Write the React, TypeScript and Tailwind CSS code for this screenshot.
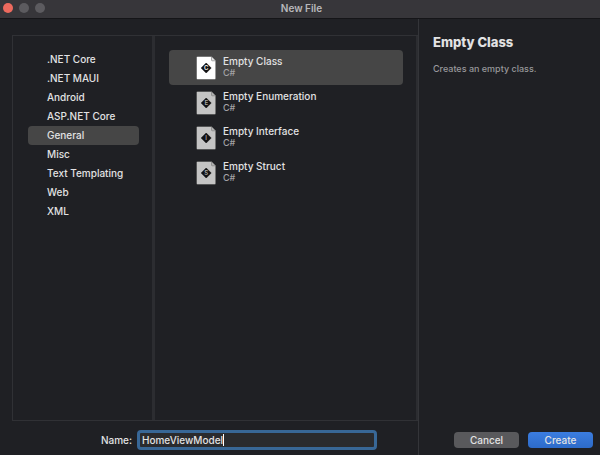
import { useState } from "react";

const categories = [
  ".NET Core",
  ".NET MAUI",
  "Android",
  "ASP.NET Core",
  "General",
  "Misc",
  "Text Templating",
  "Web",
  "XML",
];

const templates = [
  { name: "Empty Class", letter: "C" },
  { name: "Empty Enumeration", letter: "E" },
  { name: "Empty Interface", letter: "I" },
  { name: "Empty Struct", letter: "S" },
];

function FileIcon({ letter, active }: { letter: string; active: boolean }) {
  const paper = active ? "#ffffff" : "#c4c4c4";
  return (
    <svg width="20" height="24" viewBox="0 0 20 24" className="shrink-0" aria-hidden="true">
      <path
        d="M1.5 0.5H15.5L19.7 4.7V22.5Q19.7 23.5 18.7 23.5H1.5Q0.5 23.5 0.5 22.5V1.5Q0.5 0.5 1.5 0.5Z"
        fill={paper}
        stroke="#0d0d0f"
        strokeOpacity="0.6"
        strokeWidth="0.5"
      />
      <path d="M15.5 0.7V4Q15.5 4.8 16.3 4.8H19.6Z" fill={active ? "#e2e2e2" : "#b0b0b0"} />
      <path d="M15.5 0.7V4Q15.5 4.8 16.3 4.8H19.6" fill="none" stroke="#777777" strokeWidth="0.6" />
      <path d="M10.2 7L15.2 12L10.2 17L5.2 12Z" fill="#121214" stroke="#121214" strokeWidth="0.6" strokeLinejoin="round" />
      <text
        x="10.2"
        y="14.2"
        textAnchor="middle"
        fontSize="6"
        fontWeight="600"
        fill={active ? "#ffffff" : "#a8a8a8"}
        className="font-['Inter',sans-serif]"
      >
        {letter}
      </text>
    </svg>
  );
}

export default function App() {
  const [category, setCategory] = useState("General");
  const [template, setTemplate] = useState("Empty Class");
  const [name, setName] = useState("HomeViewModel");

  return (
    <div className="flex min-h-screen flex-col bg-[#1f2024] font-['Inter','Liberation_Sans',sans-serif] text-[10px] font-medium text-[#e2e2e3]">
      <header className="grid h-[19px] shrink-0 grid-cols-[1fr_auto_1fr] items-center border-b border-[#151518] bg-[#37363a] pb-0.5 pl-[3px]">
        <div className="flex gap-1.5">
          <button aria-label="Close" className="size-2.5 rounded-full bg-[#ed6a5e]" />
          <button aria-label="Minimize" className="size-2.5 rounded-full bg-[#5c5b5f]" />
          <button aria-label="Zoom" className="size-2.5 rounded-full bg-[#5c5b5f]" />
        </div>
        <h1 className="leading-3 font-semibold text-[#b9b8bb]">New File</h1>
      </header>

      <main className="flex grow">
        <div className="flex w-[419px] shrink-0 flex-col border-r border-[#343539]">
          <div className="mt-4 ml-3 flex grow border-t border-b border-l border-[#303135]">
            <nav aria-label="Categories" className="w-[139px] shrink-0 pt-[14px] pr-[13px] pl-[15px]">
              {categories.map((item) => (
                <button
                  key={item}
                  onClick={() => setCategory(item)}
                  className={`block h-[19px] w-full rounded px-[19px] text-left leading-[19px] whitespace-nowrap ${
                    item === category ? "bg-[#464646]" : ""
                  }`}
                >
                  {item}
                </button>
              ))}
            </nav>
            <div className="grow border-r-2 border-l-3 border-[#2c2d31] pt-3.5 pr-[13px] pl-3.5">
              {templates.map((item) => (
                <button
                  key={item.name}
                  onClick={() => setTemplate(item.name)}
                  className={`flex h-[35px] w-full items-center gap-[7px] rounded pl-[27px] text-left ${
                    item.name === template ? "bg-[#464646]" : ""
                  }`}
                >
                  <FileIcon letter={item.letter} active={item.name === template} />
                  <span className="flex flex-col pb-[3px]">
                    <span className="leading-3">{item.name}</span>
                    <span className="text-[9px] leading-[11px] text-[#a3a3a5]">C#</span>
                  </span>
                </button>
              ))}
            </div>
          </div>
          <div className="flex h-[34px] items-center pt-1 pr-[41px] pl-[101px]">
            <label htmlFor="file-name" className="w-9 shrink-0">
              Name:
            </label>
            <div className="relative grow">
              <input
                id="file-name"
                value={name}
                onChange={(event) => setName(event.target.value)}
                className="block h-5 w-full rounded-sm border-3 border-[#386796] bg-[#2a2b2e] px-0.5 outline-none"
              />
              <span className="pointer-events-none absolute top-1 left-[86px] h-3 w-px bg-white" />
            </div>
          </div>
        </div>

        <aside className="flex grow flex-col pt-[15px] pr-[7px] pb-[7px] pl-3.5">
          <h2 className="text-[13px] leading-4 font-extrabold">Empty Class</h2>
          <p className="mt-[13px] text-[9px] leading-3 text-[#98989b]">Creates an empty class.</p>
          <div className="mt-auto flex justify-end gap-[9px]">
            <button className="h-4 w-[65px] rounded bg-[#59595c] leading-4">Cancel</button>
            <button className="h-4 w-[65px] rounded bg-linear-to-b from-[#3b7de0] to-[#2d6bc9] leading-4">
              Create
            </button>
          </div>
        </aside>
      </main>
    </div>
  );
}
